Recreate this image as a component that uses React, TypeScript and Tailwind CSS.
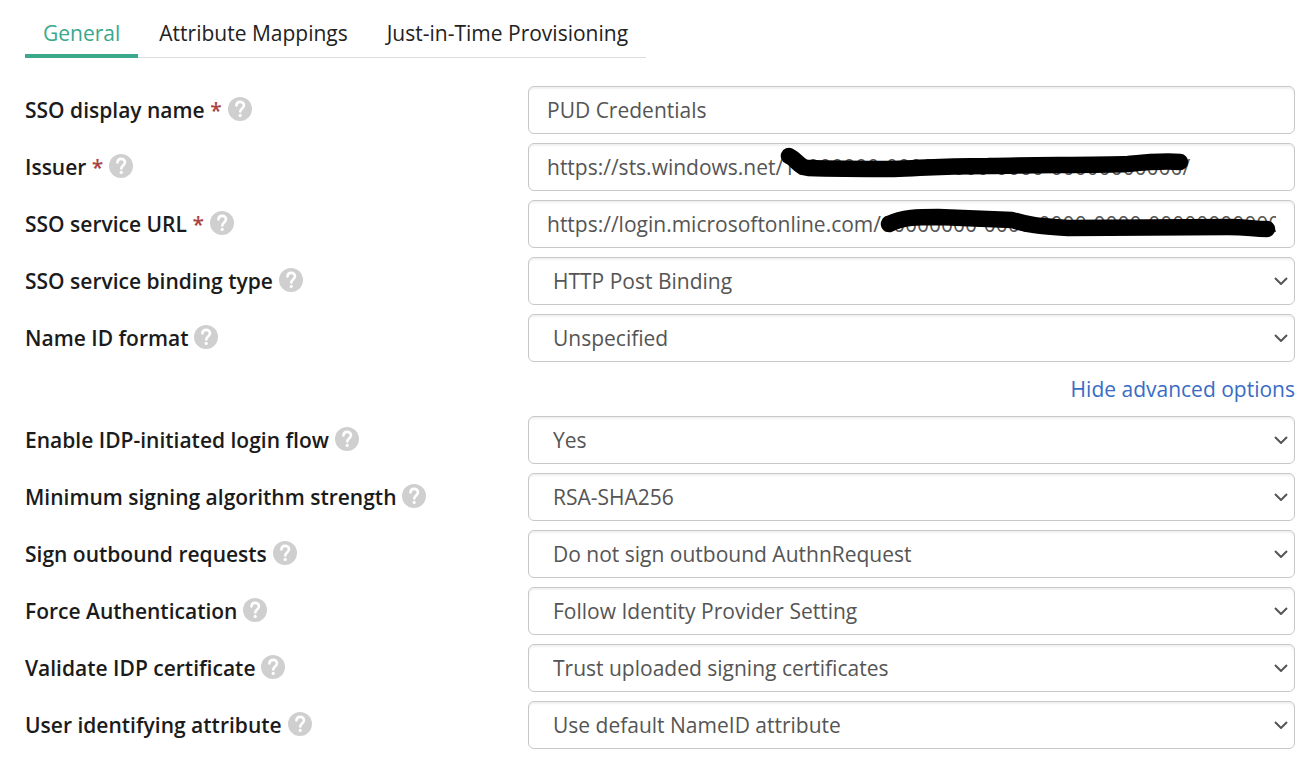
import { useId, type ReactNode } from "react";

const controlClass =
  "block h-12 w-full rounded-md border border-[#c8c8c8] bg-white text-[21px] font-normal text-[#555555] shadow-[inset_0_2px_2px_rgba(0,0,0,0.06)] outline-none focus:border-[#3aa88a]";

function HelpIcon() {
  return (
    <svg viewBox="0 0 24 24" className="size-6" aria-hidden="true">
      <circle cx="12" cy="12" r="12" fill="#cfcfcf" />
      <path
        d="M8.400 8.400C8.600 6.200 10.100 4.900 12.100 4.900c2.200 0 3.900 1.400 3.900 3.400 0 3-3.700 3.200-3.700 6.100"
        fill="none"
        stroke="#fff"
        strokeWidth="2.600"
        strokeLinecap="round"
      />
      <circle cx="12.200" cy="18.400" r="1.600" fill="#fff" />
    </svg>
  );
}

function Row({
  id,
  label,
  required,
  children,
}: {
  id: string;
  label: string;
  required?: boolean;
  children: ReactNode;
}) {
  return (
    <div className="grid grid-cols-[minmax(0,503fr)_minmax(0,767fr)] items-center">
      <div className="flex items-center gap-1.5">
        <label htmlFor={id} className="leading-8 font-semibold text-[#1b1b1b]">
          {label}
          {required && <span className="text-[#a94442]"> *</span>}
        </label>
        <button type="button" aria-label={`Help: ${label}`} className="-mt-0.5">
          <HelpIcon />
        </button>
      </div>
      {children}
    </div>
  );
}

function TextRow({
  label,
  value,
  marker,
}: {
  label: string;
  value: string;
  marker?: ReactNode;
}) {
  const id = useId();
  return (
    <Row id={id} label={label} required>
      <div className="relative">
        <input id={id} type="text" defaultValue={value} className={`${controlClass} px-[18px]`} />
        {marker}
      </div>
    </Row>
  );
}

function SelectRow({ label, value }: { label: string; value: string }) {
  const id = useId();
  return (
    <Row id={id} label={label}>
      <div className="relative">
        <select
          id={id}
          defaultValue={value}
          className={`${controlClass} appearance-none pt-0.5 pr-10 pl-6`}
        >
          <option>{value}</option>
        </select>
        <svg
          viewBox="0 0 14 8"
          className="pointer-events-none absolute top-5 right-[7px] h-2 w-3.5"
          fill="none"
          stroke="#555555"
          strokeWidth="2"
          aria-hidden="true"
        >
          <path d="M1 1l6 6 6-6" />
        </svg>
      </div>
    </Row>
  );
}

function Marker({ children }: { children: ReactNode }) {
  return (
    <svg
      viewBox="0 0 767 48"
      className="pointer-events-none absolute inset-0 h-12 w-full"
      fill="none"
      stroke="#000"
      strokeWidth="16.500"
      strokeLinecap="round"
      strokeLinejoin="round"
      aria-hidden="true"
    >
      {children}
    </svg>
  );
}

const tabs = ["General", "Attribute Mappings", "Just-in-Time Provisioning"];

export default function App() {
  return (
    <main className="bg-white pr-[17px] pb-3.5 pl-[25px] font-['Open_Sans',sans-serif] text-[21px]">
      <nav className="flex w-fit gap-[3px] border-b border-[#dddddd]" role="tablist">
        {tabs.map((tab, i) => (
          <button
            key={tab}
            type="button"
            role="tab"
            aria-selected={i === 0}
            className={`-mb-px h-[58px] border-b-4 px-[18px] pt-3 leading-8 ${
              i === 0 ? "border-[#3aa88a] text-[#3aa88a]" : "border-transparent text-[#222222]"
            }`}
          >
            {tab}
          </button>
        ))}
      </nav>
      <form className="mt-7 flex flex-col gap-[9px]">
        <TextRow label="SSO display name" value="PUD Credentials" />
        <TextRow
          label="Issuer"
          value="https://sts.windows.net/10000000-0000-0000-0000-00000000000/"
          marker={
            <Marker>
              <path d="M261 13C268 16 272 25 280 25C310 26 340 26 366 26C396 25 410 23 460 23C500 22 570 22 600 21C620 19 640 18 652 19" />
            </Marker>
          }
        />
        <TextRow
          label="SSO service URL"
          value="https://login.microsoftonline.com/00000000-0000-0000-0000-000000000000/saml2"
          marker={
            <Marker>
              <path d="M361 24C375 17 390 17 410 17C440 18 465 19 484 20C500 25 510 26 540 28C580 28 640 27 700 27C720 27 725 29 739 29" />
            </Marker>
          }
        />
        <SelectRow label="SSO service binding type" value="HTTP Post Binding" />
        <SelectRow label="Name ID format" value="Unspecified" />
        <div className="flex h-9 items-center justify-end">
          <a href="#advanced" className="leading-8 text-[#3a6cc4]">
            Hide advanced options
          </a>
        </div>
        <SelectRow label="Enable IDP-initiated login flow" value="Yes" />
        <SelectRow label="Minimum signing algorithm strength" value="RSA-SHA256" />
        <SelectRow label="Sign outbound requests" value="Do not sign outbound AuthnRequest" />
        <SelectRow label="Force Authentication" value="Follow Identity Provider Setting" />
        <SelectRow label="Validate IDP certificate" value="Trust uploaded signing certificates" />
        <SelectRow label="User identifying attribute" value="Use default NameID attribute" />
      </form>
    </main>
  );
}
